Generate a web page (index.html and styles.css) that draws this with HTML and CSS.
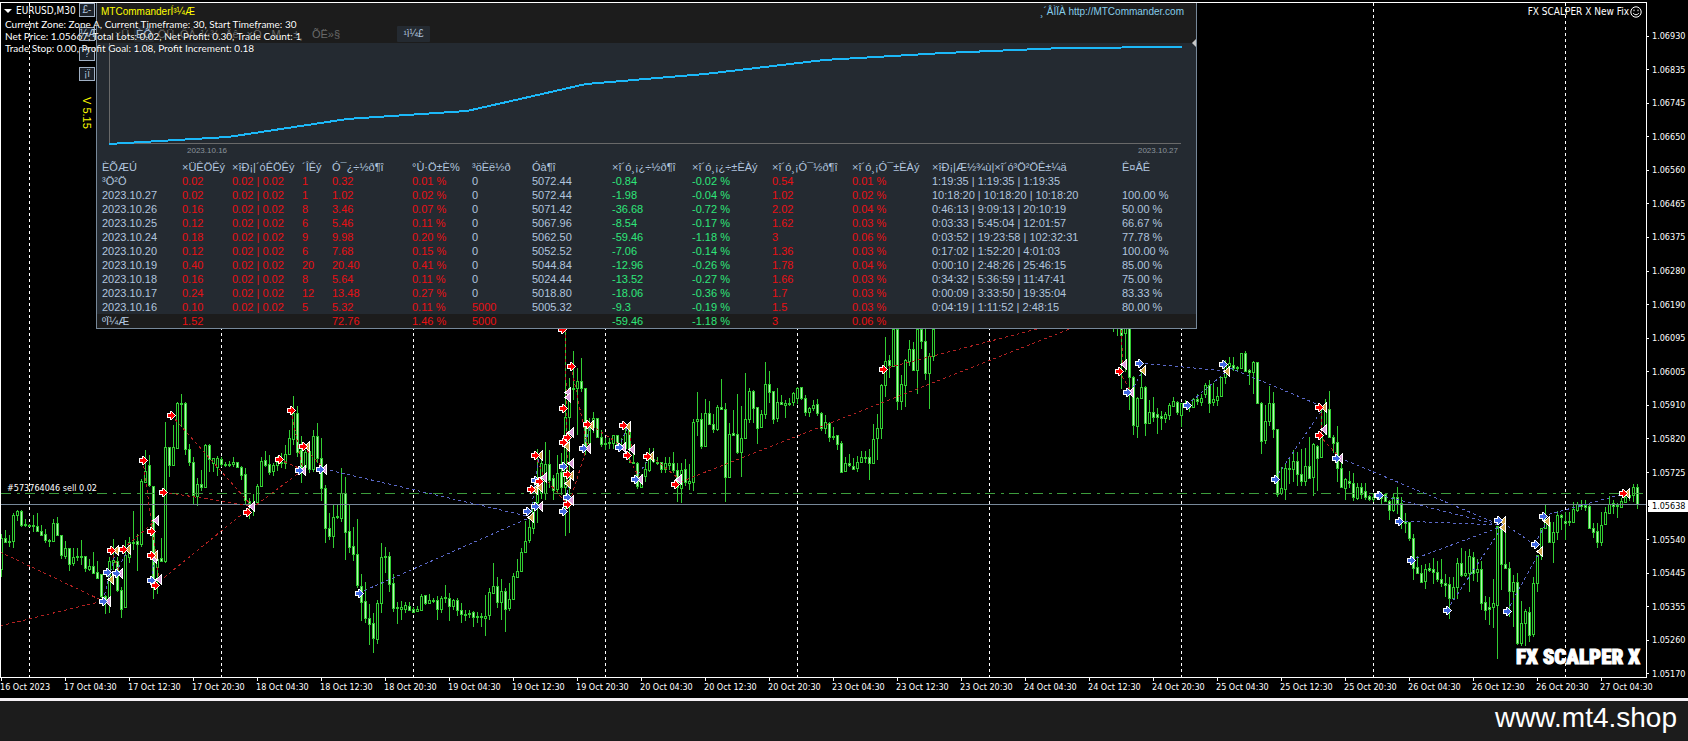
FILE: index.html
```html
<!DOCTYPE html>
<html lang="en">
<head>
<meta charset="utf-8">
<title>EURUSD,M30</title>
<link rel="stylesheet" href="styles.css">
</head>
<body>
<main class="terminal">
  <section class="chart">
    <div class="plot">
      <svg class="plot-svg" id="plot" viewBox="0 0 1647 678" preserveAspectRatio="none" role="img" aria-label="EURUSD M30 candles"></svg>
      <span class="order-label">#573764046 sell 0.02</span>
      <span class="watermark">FX SCALPER X</span>
      <div class="expert">FX SCALPER X New Fix
        <svg class="smiley" viewBox="0 0 12 12"><circle cx="6" cy="6" r="5.2"/><path d="M3.2 7.2Q6 10.4 8.8 7.2M4 3.6v1.6M8 3.6v1.6"/></svg>
      </div>
    </div>
    <ol class="price-axis">
      <li>1.06930</li><li>1.06835</li><li>1.06745</li><li>1.06650</li><li>1.06560</li><li>1.06465</li><li>1.06375</li><li>1.06280</li><li>1.06190</li><li>1.06095</li><li>1.06005</li><li>1.05910</li><li>1.05820</li><li>1.05725</li><li class="current">1.05638</li><li>1.05540</li><li>1.05445</li><li>1.05355</li><li>1.05260</li><li>1.05170</li>
    </ol>
    <ol class="time-axis">
      <li>16 Oct 2023</li><li>17 Oct 04:30</li><li>17 Oct 12:30</li><li>17 Oct 20:30</li><li>18 Oct 04:30</li><li>18 Oct 12:30</li><li>18 Oct 20:30</li><li>19 Oct 04:30</li><li>19 Oct 12:30</li><li>19 Oct 20:30</li><li>20 Oct 04:30</li><li>20 Oct 12:30</li><li>20 Oct 20:30</li><li>23 Oct 04:30</li><li>23 Oct 12:30</li><li>23 Oct 20:30</li><li>24 Oct 04:30</li><li>24 Oct 12:30</li><li>24 Oct 20:30</li><li>25 Oct 04:30</li><li>25 Oct 12:30</li><li>25 Oct 20:30</li><li>26 Oct 04:30</li><li>26 Oct 12:30</li><li>26 Oct 20:30</li><li>27 Oct 04:30</li>
    </ol>

    <div class="toolbox">
      <button type="button">£-</button>
      <button type="button">¼Æ</button>
      <button type="button">?</button>
      <button type="button">¡ï</button>
      <span class="version">V 5.15</span>
    </div>

    <section class="panel">
      <header class="panel-head">
        <div class="panel-title">
          <h1>MTCommanderÍ³¼Æ</h1>
          <a href="http://MTCommander.com">¸´ÅÌÏÀ http://MTCommander.com</a>
        </div>
        <nav class="tabs">
          <button type="button">×Ü</button>
          <button type="button" class="on">ÈÕ</button>
          <button type="button">ÖÜ</button>
          <button type="button">ÔÂ</button>
          <button type="button">¼¾</button>
          <button type="button">Äê</button>
          <button type="button">×Ô</button>
          <button type="button">M</button>
          <button type="button">±¸</button>
          <button type="button" class="wide">ÕË»§</button>
          <button type="button" class="on track">¹ì¼£</button>
        </nav>
        <i class="collapse"></i>
      </header>
      <div class="equity">
        <svg viewBox="0 0 1073 101" preserveAspectRatio="none" role="img" aria-label="Balance curve">
          <path class="equity-axis" d="M.5 0V100.5H1072"/>
          <polyline class="equity-line" points="0,101 119,94 238,76 358,68 477,41 596,31 715,17 835,10 954,5 1073,4"/>
        </svg>
        <div class="equity-dates"><span>2023.10.16</span><span>2023.10.27</span></div>
      </div>
      <table class="stats">
        <colgroup><col class="w80"><col class="w50"><col class="w70"><col class="w30"><col class="w80"><col class="w60"><col class="w60"><col class="w80"><col class="w80"><col class="w80"><col class="w80"><col class="w80"><col class="w190"><col></colgroup>
        <thead><tr><th>ÈÕÆÚ</th><th>×ÜÊÖÊý</th><th>×îÐ¡|´óÊÖÊý</th><th>´ÎÊý</th><th>Ó¯¿÷½ð¶î</th><th>°Ù·Ö±È%</th><th>³öÈë½ð</th><th>Óà¶î</th><th>×î´ó¸¡¿÷½ð¶î</th><th>×î´ó¸¡¿÷±ÈÀý</th><th>×î´ó¸¡Ó¯½ð¶î</th><th>×î´ó¸¡Ó¯±ÈÀý</th><th>×îÐ¡|Æ½¾ù|×î´ó³Ö²ÖÊ±¼ä</th><th>Ê¤ÂÊ</th></tr></thead>
        <tbody id="days"></tbody>
        <tfoot><tr><td>ºÏ¼Æ</td><td class="up">1.52</td><td></td><td></td><td class="up">72.76</td><td class="up">1.46 %</td><td class="up">5000</td><td></td><td class="down">-59.46</td><td class="down">-1.18 %</td><td class="up">3</td><td class="up">0.06 %</td><td></td><td></td></tr></tfoot>
      </table>
    </section>

    <div class="comment">
      <p class="symbol">EURUSD,M30</p>
      <p>Current Zone: Zone A, Current Timeframe: 30, Start Timeframe: 30</p>
      <p>Net Price: 1.05667, Total Lots: 0.02, Net Profit: 0.30, Trade Count: 1</p>
      <p>Trade Stop: 0.00, Profit Goal: 1.08, Profit Increment: 0.18</p>
    </div>
  </section>
  <footer class="site">www.mt4.shop</footer>
</main>
<script src="chart.js"></script>
</body>
</html>
```
FILE: styles.css
```css
* { box-sizing: border-box; }

body {
  margin: 0;
  background: #000;
  color: #fff;
  font-family: "DejaVu Sans Condensed", "Noto Sans", sans-serif;
  font-size: 9px;
  line-height: 12px;
}

p, h1, ol { margin: 0; padding: 0; }
ol { list-style: none; }
button { font: inherit; padding: 0; }

.terminal {
  display: flex;
  flex-direction: column;
  min-height: 100vh;
}

.chart {
  position: relative;
  flex: 1;
  display: grid;
  grid-template-columns: minmax(0, 1fr) 41px;
  grid-template-rows: minmax(0, 1fr) 20px;
  min-height: 500px;
  overflow: hidden;
}

.plot { position: relative; }
.plot-svg { position: absolute; inset: 0; width: 100%; height: 100%; }

.order-label { position: absolute; left: 7px; top: 71%; line-height: 14px; }

.watermark {
  position: absolute;
  right: 7px;
  bottom: 7px;
  font: 900 21px/28px Impact, "Roboto Condensed", Roboto, sans-serif;
  -webkit-text-stroke: 1px #fff;
  white-space: nowrap;
}

.expert {
  position: absolute;
  right: 5px;
  top: 6px;
  display: flex;
  align-items: center;
  gap: 1px;
  font-size: 10px;
}
.smiley { width: 12px; height: 12px; fill: none; stroke: #fff; }

.price-axis {
  display: flex;
  flex-direction: column;
  justify-content: space-between;
  padding: 30px 0 0;
  margin-bottom: -2px;
}
.price-axis li { display: flex; align-items: center; gap: 3px; }
.price-axis li::before { content: ""; width: 2px; height: 1px; background: #fff; }
.price-axis .current { background: #fff; color: #000; margin-left: 1px; }
.price-axis .current::before { background: #000; width: 1px; }

.time-axis {
  grid-column: 1 / -1;
  display: grid;
  grid-template-columns: repeat(26, minmax(0, 1fr));
  margin-right: 24px;
}
.time-axis li { white-space: nowrap; }
.time-axis li::before { content: ""; display: block; width: 1px; height: 3px; margin-left: 1px; background: #fff; }

.toolbox {
  position: absolute;
  left: 79px;
  top: 3px;
  width: 16px;
  display: flex;
  flex-direction: column;
  gap: 6px;
}
.toolbox button {
  height: 14px;
  border: 1px solid #a0b0c4;
  background: #1c222a;
  color: #b0c4de;
  font: 10px/10px "Liberation Sans", Arial, sans-serif;
}
.toolbox button:first-child { margin-bottom: 4px; }
.version {
  margin: 10px 0 0 4px;
  writing-mode: vertical-rl;
  color: #ff0;
  font: 11px/16px "Liberation Sans", Arial, sans-serif;
}

.panel {
  position: absolute;
  left: 96px;
  top: 3px;
  width: calc(100% - 96px);
  max-width: 1101px;
  border: 1px solid #778899;
  border-top: 0;
  background: #242a31;
  color: #b0c4de;
  font: 11px/14px "Liberation Sans", Arial, sans-serif;
}

.panel-head { position: relative; height: 40px; background: #1c1c1c; }
.panel-title {
  display: flex;
  justify-content: space-between;
  padding: 2px 12px 0 4px;
}
.panel-title h1 { color: #ff0; font-size: 10px; font-weight: normal; }
.panel-title a { color: #87ceeb; font-size: 10px; text-decoration: none; }

.tabs { display: flex; gap: 2px; padding: 7px 0 0 15px; }
.tabs button {
  width: 20px;
  height: 16px;
  border: 0;
  background: none;
  color: #696969;
}
.tabs .wide { width: 32px; }
.tabs .on { background: #242a31; color: #b0c4de; border-radius: 1px; }
.tabs .track { width: 33px; margin-left: 53px; font-size: 10px; }

.collapse {
  position: absolute;
  right: 0;
  bottom: -4px;
  border: 4px solid transparent;
  border-left: 0;
  border-right-color: #c8c8c8;
}

.equity { padding: 0 14px 0 12px; }
.equity svg { display: block; width: 100%; height: 101px; overflow: visible; shape-rendering: crispEdges; }
.equity-axis { fill: none; stroke: #696969; }
.equity-line { fill: none; stroke: #1cb8f8; stroke-width: 2; }
.equity-dates {
  display: flex;
  justify-content: space-between;
  padding: 1px 4px 0 78px;
  color: #8a939c;
  font-size: 8px;
  line-height: 12px;
}

.stats {
  width: 100%;
  margin-top: 3px;
  border-collapse: collapse;
  table-layout: fixed;
}
.stats th, .stats td {
  padding: 0;
  font-weight: normal;
  text-align: left;
  white-space: nowrap;
}
.stats th:first-child, .stats td:first-child { padding-left: 5px; }
.stats col:first-child { width: 85px; }
.stats tfoot { background: #1c1c1c; }
.w30 { width: 30px; }
.w50 { width: 50px; }
.w60 { width: 60px; }
.w70 { width: 70px; }
.w80 { width: 80px; }
.w190 { width: 190px; }
.up { color: #e81014; }
.down { color: #2ee67a; }

.comment {
  position: absolute;
  left: 5px;
  top: 5px;
  font-family: Lato, "Noto Sans", sans-serif;
  font-size: 10px;
  text-shadow: 0 0 1px #000;
}
.comment .symbol {
  padding-left: 11px;
  margin-bottom: 1px;
  font-family: "DejaVu Sans Condensed", "Noto Sans", sans-serif;
}
.comment .symbol::before {
  content: "";
  float: left;
  margin: 4px 0 0 -12px;
  border: 4px solid transparent;
  border-top-color: #fff;
  border-bottom: 0;
}

.site {
  height: 43px;
  padding-right: 11px;
  border-top: 3px solid #f4f0f4;
  background: #1c1c1c;
  font: 28px/34px "Liberation Sans", Arial, sans-serif;
  text-align: right;
}

.bg-line { stroke: #fff; stroke-dasharray: 3 3; }
.frame { fill: none; stroke: #fff; }
.bid { stroke: #778899; }
.order { stroke: #3c9c3c; stroke-dasharray: 10 6 3 5; }
.wick { stroke: #32cd32; fill: none; }
.bull { stroke: #32cd32; fill: #000; }
.bear { stroke: #32cd32; fill: #b4f8b4; }
.loss { stroke: #b22222; stroke-dasharray: 3 3; }
.gain { stroke: #5a68c8; stroke-dasharray: 3 3; }
.mark { stroke: #fff; }
.r { fill: #f00; }
.b { fill: #4169e1; }
.p { fill: #dda0dd; }
.g { fill: #d2a84c; }
```
FILE: chart.js
```js
// Each block has an origin in plot units; its values are thirds of a unit below that origin.
// A candle is "high low bodyTop bodyBottom kind", kind: u rising, d falling.
const blocks = [
  { x: 1, y: 370, candles: `493 622 505 597 u;480 520 505 515 d;495 530 513 515 d;430 535 434 514 u;420 452 422 436 u;420 470 422 465 d;448 470 462 464 d;462 472 465 467 d;435 485 464 468 u;430 487 468 484 d;465 495 482 494 d;478 520 492 511 d;508 530 511 514 d;448 516 460 514 u;440 497 460 495 d;495 566 495 556 d;512 566 533 558 u;533 602 533 581 d;535 588 560 580 u;535 573 557 560 d;510 585 558 562 d;558 606 558 595 d;568 603 588 597 u;545 612 588 610 d;573 627 607 625 d;613 685 613 677 d;675 733 677 697 d;560 730 573 695 u;507 600 570 575 u;560 665 573 660 d;650 745 660 716 d;510 714 555 712 u;500 580 517 560 u;423 540 515 520 u;492 602 514 522 d;328 530 333 523 u;240 335 303 335 u;254 350 286 346 d;348 686 348 625 d;560 672 568 590 u;503 575 565 572 d;155 580 232 572 u;232 322 232 286 d;165 287 232 284 u;97 236 100 233 u;73 170 98 101 u;95 255 98 238 d;223 288 238 277 d;262 405 275 375 d;325 407 343 378 u;300 362 343 350 d;222 353 226 352 u;222 305 226 268 d;268 305 265 278 u;258 318 265 290 u;262 292 268 282 d;276 290 281 283 d;272 292 281 284 d;262 290 277 283 u;275 292 277 291 d;288 330 290 315 d;293 402 313 390 d;385 446 392 400 d;373 438 400 405 u;342 400 348 397 u;262 350 272 347 u;243 290 270 285 d;255 316 283 305 d;280 317 285 303 u;257 303 275 285 u;250 293 275 280 d;225 298 252 280 u;180 255 205 253 u;78 225 130 208 u;107 260 130 245 d;198 338 240 290 d;240 315 245 290 u;235 308 243 297 d;180 305 198 297 u;158 280 198 265 d;205 392 265 353 d;345 520 353 473 d;430 510 473 497 d;405 535 440 497 u;405 447 438 442 u;293 455 370 443 u;320 570 370 485 d;405 550 483 530 d;470 573 528 553 d;447 655 552 646 d` },
  { x: 361, y: 320, candles: `762 903 797 845 d;785 910 843 895 d;852 975 895 912 d;880 1000 910 955 d;840 972 850 957 u;668 880 710 850 u;680 758 708 712 d;697 815 708 793 d;762 875 790 863 d;845 912 860 865 d;842 900 860 866 u;845 880 855 868 u;845 872 857 870 d;862 877 867 875 d;858 877 868 874 u;822 873 828 870 u;825 855 825 850 d;822 852 840 848 u;835 850 840 843 d;828 900 840 867 d;827 880 833 866 u;795 848 830 835 u;820 902 833 858 d;838 870 840 857 u;835 888 840 870 d;850 908 870 882 d;870 902 882 886 d;870 895 878 883 u;872 922 877 890 d;875 910 887 891 d;880 922 888 892 d;825 947 887 893 u;805 900 815 886 u;730 822 798 820 u;770 865 798 847 d;778 900 812 847 u;805 935 812 866 d;790 872 838 865 u;760 840 768 838 u;718 775 753 770 u;683 757 697 752 u;603 700 662 697 u;590 668 622 660 u;545 642 545 623 u;388 610 470 545 u;420 538 430 520 u;365 540 432 520 u;390 505 432 480 d;465 540 475 510 d;405 520 458 507 u;400 525 455 500 d;27 648 290 500 u;175 638 205 290 u;93 240 205 208 u;145 345 182 205 u;115 215 183 205 d;205 405 205 382 d;295 380 320 368 u;275 340 295 320 u;293 355 295 352 d;330 380 352 372 d;355 390 368 373 u;355 388 366 370 u;345 388 346 370 u;345 390 346 380 d;355 385 380 383 d;318 395 340 385 u;310 430 315 388 d;385 432 427 430 d;425 508 428 498 d;463 502 468 500 u;425 485 448 467 u;383 455 418 450 u;385 430 418 422 d;410 435 425 430 d;425 460 427 448 d;412 458 430 446 u;412 450 430 434 u;395 460 430 450 d;428 545 450 500 d;430 548 450 505 u;417 497 448 487 d;432 510 484 490 u;297 512 305 485 u;217 347 298 303 u;280 388 298 377 d;238 382 278 378 u;243 315 278 313 d;282 340 313 328 d;255 332 262 328 u;178 268 262 266 d;250 545 268 472 d;310 473 343 472 u;270 348 340 345 d;222 402 343 396 d;257 470 353 396 u;158 358 298 355 u;205 308 213 298 u;210 310 212 265 d;262 372 262 323 d;270 325 283 322 u;127 298 193 283 u;153 250 193 215 d;212 312 213 297 d;205 305 247 295 u;225 255 247 253 d;240 293 249 254 u;235 257 249 252 d;215 257 218 247 u;200 252 205 235 u;200 240 202 233 d;225 288 235 275 d;262 292 263 275 u;240 273 254 263 u;238 288 252 280 d;275 332 280 325 d;285 342 305 325 u;305 365 308 352 d;320 360 347 350 u;345 390 345 373 d;362 457 370 456 d;410 455 428 453 u;402 440 430 435 d;415 450 437 447 d;407 457 425 445 u;392 430 410 425 u;392 430 410 415 d;387 480 412 428 d;312 432 357 430 u;283 420 325 355 u;192 357 195 325 u;52 230 122 195 u;105 175 120 135 d;27 140 27 138 u;27 270 27 242 d;165 270 192 242 u;118 262 120 195 u;60 138 87 122 u;65 152 88 150 d;27 222 27 150 u;27 88 27 62 d;27 180 62 160 d;100 267 108 160 u;27 123 27 108 u` },
  { x: 1113, y: 320, candles: `20 35 20 22 d;20 47 20 22 d;20 207 20 45 d;20 155 20 40 u;20 270 20 170 d;168 345 172 315 d;232 353 235 317 u;148 237 200 235 u;198 348 200 310 d;240 313 277 308 u;232 305 277 290 d;265 342 283 290 d;272 330 287 293 d;275 308 283 295 u;248 300 255 285 u;230 260 243 257 u;243 285 245 277 d;248 322 250 285 u;240 262 250 258 d;250 275 258 262 d;233 265 238 262 u;222 255 238 243 d;222 258 235 245 u;188 235 195 222 u;180 278 195 248 d;190 257 238 245 u;200 258 227 240 u;170 228 172 227 u;120 192 133 172 u;112 148 130 137 u;110 152 135 145 d;137 155 140 145 d;98 148 100 143 u;93 155 98 152 d;148 195 150 155 d;122 222 127 155 u;125 250 127 248 d;247 402 250 362 d;255 372 303 360 u;198 318 250 303 u;217 355 250 328 d;327 532 328 523 d;440 525 505 520 u;432 540 445 507 u;410 492 443 447 u;390 485 423 447 u;395 497 423 463 d;388 497 462 482 d;385 497 438 483 u;352 478 438 473 d;370 528 373 470 u;375 513 377 413 d;268 415 345 410 u;237 345 265 330 u;213 353 268 352 d;345 398 352 368 d;318 487 367 443 d;418 505 443 502 d;475 540 477 503 u;452 505 482 488 d;460 543 490 530 d;488 540 500 533 u;490 537 500 522 d;490 540 513 530 d;525 542 528 537 d` },
  { x: 1373, y: 380, candles: `340 365 350 356 u;340 360 345 353 u;335 373 350 355 u;340 365 342 362 d;360 420 362 390 d;340 395 352 390 u;320 403 352 368 d;350 448 368 420 d;400 460 423 428 d;425 483 427 475 d;462 600 475 563 d;528 582 562 580 d;555 610 580 607 d;553 627 567 603 u;550 577 565 570 d;535 613 567 577 d;543 605 577 598 d;537 620 597 610 d;582 650 610 615 d;592 717 613 655 d;590 660 620 655 u;535 658 548 622 u;503 590 550 585 d;513 590 580 585 u;507 635 528 580 u;517 602 530 578 d;538 607 567 577 u;543 690 568 668 d;648 720 667 690 d;650 735 680 687 d;597 743 670 680 u;437 838 437 675 u;437 630 440 553 d;430 568 553 563 d;547 710 563 632 d;585 740 607 633 u;580 795 607 790 d;662 797 728 790 u;687 797 693 730 u;680 787 697 765 d;592 770 610 763 u;525 635 525 608 u;443 540 445 525 u;372 447 418 443 u;410 488 425 487 d;425 548 457 487 u;393 480 405 457 u;402 450 405 410 d;395 480 422 428 d;395 437 422 426 d;365 427 387 425 u;365 395 373 390 u;360 390 373 378 d;360 392 375 380 d;375 447 378 445 d;430 475 443 455 d;430 503 453 485 d;397 497 435 485 u;380 433 395 433 u;348 403 372 400 u;360 403 370 378 d;370 413 375 377 u;355 385 363 380 u;340 370 350 365 u;335 362 345 350 d;312 367 322 345 u;312 387 322 373 d` }
];

// r sell, b buy, p / g closing arrows; lines join an opening to its close.
const trades = [
  { x: 0, y: 370,
    marks: 'r512,135 r872,121 r428,271 r836,268 g922,229 r910,229 r488,367 p909,300 b898,300 p972,298 b960,298 p755,409 r740,427 p467,450 r453,484 g347,541 r333,541 g383,538 r368,538 b320,606 p360,610 b348,610 g334,626 p463,565 g466,556 r453,556 b453,630 p478,626 r464,646 p324,694 b309,694 b1076,670',
    loss: '0,545,309,694 0,768,309,694 488,367,755,409 512,135,755,409 464,646,755,409 740,427,909,300 428,271,478,626 872,121,909,300 333,541,360,610 368,538,467,450 910,229,972,298 836,268,909,300',
    gain: '309,694,347,541 348,610,383,538 453,630,466,556 972,298,1593,441 1076,670,1593,441' },
  { x: 340, y: 320,
    marks: 'r667,27 r692,139 p683,216 p683,230 r668,265 p694,337 r680,352 r668,367 g682,377 b668,438 p694,430 g694,464 r680,463 g683,488 p692,540 b680,532 r680,553 b668,574 g599,404 r584,405 p611,472 b584,480 r597,483 g586,506 r572,506 g600,500 p600,559 b584,559 b560,574 g574,592 g754,316 r740,313 p743,383 b728,384 g863,317 r848,316 p850,382 b836,382 p875,388 r860,406 p899,476 b884,476 g934,408 r920,408 p1018,477 r1004,493 r1628,148',
    loss: '676,27,683,500 692,139,743,383 740,380,692,535 754,316,850,382 860,406,899,476 863,317,875,388 934,408,1018,477 584,405,611,472 611,472,680,553 1004,493,2220,15 1628,148,2160,10',
    gain: '584,480,600,400 572,590,584,480 836,382,863,317 884,476,934,408 728,384,754,316 668,574,694,464' },
  { x: 1080, y: 320,
    marks: 'p131,132 r116,152 b176,130 g190,149 p154,217 b142,217 b320,256 b428,132 g442,152 g731,262 r716,262 p731,327 r716,346 p779,415 b767,415 b584,478 b895,526',
    loss: '124,30,128,132 116,152,154,217 724,262,724,346 716,346,779,415',
    gain: '154,217,190,149 176,130,442,152 320,256,442,152 450,145,731,262 584,478,731,262 779,415,1270,617' },
  { x: 1360, y: 380,
    marks: 'b56,346 b116,424 b152,541 b261,691 g430,423 g430,440 b415,421 b440,694 b524,493 g539,514 b548,409 g562,424 g802,340 r788,340',
    loss: '',
    gain: '56,346,430,437 116,424,430,435 152,541,430,437 261,691,430,437 430,430,524,495 440,694,539,514 548,409,802,340 524,493,562,424' }
];

const px = (origin, v) => origin + Math.round(v / 3);
const svg = [];

for (let x = 29.5; x < 1647; x += 192) svg.push(`<path class="bg-line" d="M${x} 3V677"/>`);

for (const block of blocks) {
  block.candles.split(';').forEach((row, i) => {
    const [high, low, top, bottom, kind] = row.split(' ');
    const x = block.x + i * 4;
    const y = px(block.y, +top) + 0.5;
    const h = Math.max(1, px(block.y, +bottom) + 0.5 - y);
    svg.push(`<path class="wick" d="M${x + 0.5} ${px(block.y, +high)}V${px(block.y, +low)}"/>`);
    svg.push(`<rect class="${kind === 'u' ? 'bull' : 'bear'}" x="${x - 0.5}" y="${y}" width="2" height="${h}"/>`);
  });
}

svg.push('<path class="order" d="M1 493.5H1646"/>', '<path class="bid" d="M1 504.5H1646"/>');

for (const set of trades) {
  for (const kind of ['loss', 'gain']) {
    for (const line of set[kind].split(' ').filter(Boolean)) {
      const [a, b, c, d] = line.split(',').map(Number);
      svg.push(`<path class="${kind}" d="M${px(set.x, a)} ${px(set.y, b)}L${px(set.x, c)} ${px(set.y, d)}"/>`);
    }
  }
}

const arrow = 'M-3.5 -1.5H-.5V-3.5H.5L4.5 .5L.5 4.5H-.5V2.5H-3.5Z';
const close = 'M-3 .5L2.5 -4V5Z';
for (const set of trades) {
  for (const mark of set.marks.split(' ')) {
    const [x, y] = mark.slice(1).split(',').map(Number);
    const shape = 'rb'.includes(mark[0]) ? arrow : close;
    svg.push(`<path class="mark ${mark[0]}" transform="translate(${px(set.x, x)} ${px(set.y, y)})" d="${shape}"/>`);
  }
}

svg.push('<path class="frame" d="M.5 677.5V2.5H1646.5V677.5Z"/>');
const plot = document.getElementById('plot');
plot.setAttribute('shape-rendering', 'crispEdges');
plot.innerHTML = svg.join('');

const days = [
  ['³Ö²Ö', '0.02', 1, '0.32', '0.01', 0, '5072.44', '-0.84', '-0.02', '0.54', '0.01', '1:19:35 | 1:19:35 | 1:19:35', ''],
  ['2023.10.27', '0.02', 1, '1.02', '0.02', 0, '5072.44', '-1.98', '-0.04', '1.02', '0.02', '10:18:20 | 10:18:20 | 10:18:20', '100.00 %'],
  ['2023.10.26', '0.16', 8, '3.46', '0.07', 0, '5071.42', '-36.68', '-0.72', '2.02', '0.04', '0:46:13 | 9:09:13 | 20:10:19', '50.00 %'],
  ['2023.10.25', '0.12', 6, '5.46', '0.11', 0, '5067.96', '-8.54', '-0.17', '1.62', '0.03', '0:03:33 | 5:45:04 | 12:01:57', '66.67 %'],
  ['2023.10.24', '0.18', 9, '9.98', '0.20', 0, '5062.50', '-59.46', '-1.18', '3', '0.06', '0:03:52 | 19:23:58 | 102:32:31', '77.78 %'],
  ['2023.10.20', '0.12', 6, '7.68', '0.15', 0, '5052.52', '-7.06', '-0.14', '1.36', '0.03', '0:17:02 | 1:52:20 | 4:01:03', '100.00 %'],
  ['2023.10.19', '0.40', 20, '20.40', '0.41', 0, '5044.84', '-12.96', '-0.26', '1.78', '0.04', '0:00:10 | 2:48:26 | 25:46:15', '85.00 %'],
  ['2023.10.18', '0.16', 8, '5.64', '0.11', 0, '5024.44', '-13.52', '-0.27', '1.66', '0.03', '0:34:32 | 5:36:59 | 11:47:41', '75.00 %'],
  ['2023.10.17', '0.24', 12, '13.48', '0.27', 0, '5018.80', '-18.06', '-0.36', '1.7', '0.03', '0:00:09 | 3:33:50 | 19:35:04', '83.33 %'],
  ['2023.10.16', '0.10', 5, '5.32', '0.11', 5000, '5005.32', '-9.3', '-0.19', '1.5', '0.03', '0:04:19 | 1:11:52 | 2:48:15', '80.00 %']
];
const cell = (text, tone = '') => `<td class="${tone}">${text}</td>`;
document.getElementById('days').innerHTML = days.map(d => '<tr>' + [
  cell(d[0]), cell(d[1], 'up'), cell('0.02 | 0.02', 'up'), cell(d[2], 'up'), cell(d[3], 'up'),
  cell(d[4] + ' %', 'up'), cell(d[5], d[5] ? 'up' : ''), cell(d[6]), cell(d[7], 'down'),
  cell(d[8] + ' %', 'down'), cell(d[9], 'up'), cell(d[10] + ' %', 'up'), cell(d[11]), cell(d[12])
].join('') + '</tr>').join('');
```
